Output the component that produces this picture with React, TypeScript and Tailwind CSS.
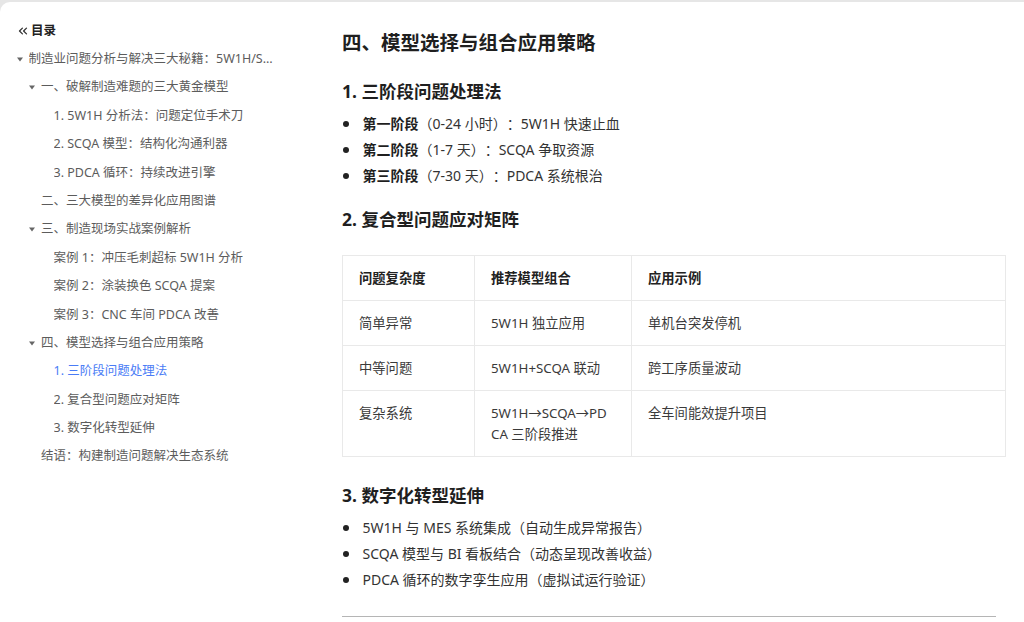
import { ChevronsLeft } from "lucide-react";

type TocItem = { text: string; level: number; arrow?: boolean; active?: boolean };

const toc: TocItem[] = [
  { text: "制造业问题分析与解决三大秘籍：5W1H/SCQA/PDCA 实战指南", level: 0, arrow: true },
  { text: "一、破解制造难题的三大黄金模型", level: 1, arrow: true },
  { text: "1. 5W1H 分析法：问题定位手术刀", level: 2 },
  { text: "2. SCQA 模型：结构化沟通利器", level: 2 },
  { text: "3. PDCA 循环：持续改进引擎", level: 2 },
  { text: "二、三大模型的差异化应用图谱", level: 1 },
  { text: "三、制造现场实战案例解析", level: 1, arrow: true },
  { text: "案例 1：冲压毛刺超标 5W1H 分析", level: 2 },
  { text: "案例 2：涂装换色 SCQA 提案", level: 2 },
  { text: "案例 3：CNC 车间 PDCA 改善", level: 2 },
  { text: "四、模型选择与组合应用策略", level: 1, arrow: true },
  { text: "1. 三阶段问题处理法", level: 2, active: true },
  { text: "2. 复合型问题应对矩阵", level: 2 },
  { text: "3. 数字化转型延伸", level: 2 },
  { text: "结语：构建制造问题解决生态系统", level: 1 },
];

const indent = ["pl-0", "pl-[12.5px]", "pl-[25px]"];

const stages = [
  { label: "第一阶段", rest: "（0-24 小时）：5W1H 快速止血" },
  { label: "第二阶段", rest: "（1-7 天）：SCQA 争取资源" },
  { label: "第三阶段", rest: "（7-30 天）：PDCA 系统根治" },
];

const rows = [
  ["简单异常", "5W1H 独立应用", "单机台突发停机"],
  ["中等问题", "5W1H+SCQA 联动", "跨工序质量波动"],
  ["复杂系统", "5W1H→SCQA→PDCA 三阶段推进", "全车间能效提升项目"],
];

const digital = [
  "5W1H 与 MES 系统集成（自动生成异常报告）",
  "SCQA 模型与 BI 看板结合（动态呈现改善收益）",
  "PDCA 循环的数字孪生应用（虚拟试运行验证）",
];

function Arrow() {
  return (
    <svg width="6" height="5" viewBox="0 0 6 5" className="ml-[0.5px]">
      <polygon points="0,0.5 6,0.5 3,4.5" fill="#666" />
    </svg>
  );
}

function Dot() {
  return <span className="ml-[1px] mr-[14px] h-[5.5px] w-[5.5px] shrink-0 rounded-full bg-[#222]" />;
}

export default function App() {
  return (
    <div className="h-[622px] w-[1024px] overflow-hidden bg-[#e6e6e6] pt-[2px] font-['Noto_Sans','Noto_Sans_CJK_SC',sans-serif] [text-spacing-trim:space-all]">
      <div className="flex h-full rounded-tl-[10px] bg-white">
        <aside className="w-[290px] shrink-0 pl-4 pr-4 pt-[19px]">
          <div className="flex h-5 items-center text-[12.5px] font-bold text-[#222]">
            <ChevronsLeft size={14} strokeWidth={2.2} className="mr-[1px] text-[#333]" />
            <span className="leading-5">目录</span>
          </div>
          <ul className="mt-[4px]">
            {toc.map((t) => (
              <li key={t.text} className={`flex h-[28.4px] items-center ${indent[t.level]}`}>
                <span className="flex w-[12.5px] shrink-0 items-center">{t.arrow && <Arrow />}</span>
                <span
                  className={`truncate text-[12.5px] leading-[28.4px] ${t.active ? "text-[#4a7cf6]" : "text-[#5c5c5c]"}`}
                >
                  {t.text}
                </span>
              </li>
            ))}
          </ul>
        </aside>

        <main className="flex-1 pl-[52px] pr-[19px] text-[#333]">
          <h2 className="mt-[27px] text-[19.5px] font-bold leading-[28px] text-[#1f1f1f]">四、模型选择与组合应用策略</h2>

          <h3 className="mt-[21px] text-[17.5px] font-bold leading-[26px] text-[#1f1f1f]">1. 三阶段问题处理法</h3>
          <ul className="mt-[7px] text-[14px] leading-[26px]">
            {stages.map((s) => (
              <li key={s.label} className="flex items-center">
                <Dot />
                <span>
                  <strong className="font-bold text-[#1f1f1f]">{s.label}</strong>
                  {s.rest}
                </span>
              </li>
            ))}
          </ul>

          <h3 className="mt-[17px] text-[17.5px] font-bold leading-[26px] text-[#1f1f1f]">2. 复合型问题应对矩阵</h3>
          <table className="mt-[23px] w-[664px] table-fixed border-collapse text-[13.3px] leading-[21px]">
            <colgroup>
              <col className="w-[132px]" />
              <col className="w-[157px]" />
              <col />
            </colgroup>
            <thead>
              <tr>
                {["问题复杂度", "推荐模型组合", "应用示例"].map((h) => (
                  <th
                    key={h}
                    className="border border-[#e9e9e9] px-4 py-[11.5px] text-left align-top font-bold text-[#222]"
                  >
                    {h}
                  </th>
                ))}
              </tr>
            </thead>
            <tbody>
              {rows.map((r) => (
                <tr key={r[0]}>
                  {r.map((c) => (
                    <td
                      key={c}
                      className="border border-[#e9e9e9] px-4 py-[11.5px] align-top break-all text-[#3a3a3a]"
                    >
                      {c}
                    </td>
                  ))}
                </tr>
              ))}
            </tbody>
          </table>

          <h3 className="mt-[25px] text-[17.5px] font-bold leading-[26px] text-[#1f1f1f]">3. 数字化转型延伸</h3>
          <ul className="mt-[7px] text-[14px] leading-[26px]">
            {digital.map((d) => (
              <li key={d} className="flex items-center">
                <Dot />
                <span>{d}</span>
              </li>
            ))}
          </ul>

          <hr className="mt-[23px] mr-[10px] border-t-[1.5px] border-[#b5b5b5]" />
        </main>
      </div>
    </div>
  );
}
